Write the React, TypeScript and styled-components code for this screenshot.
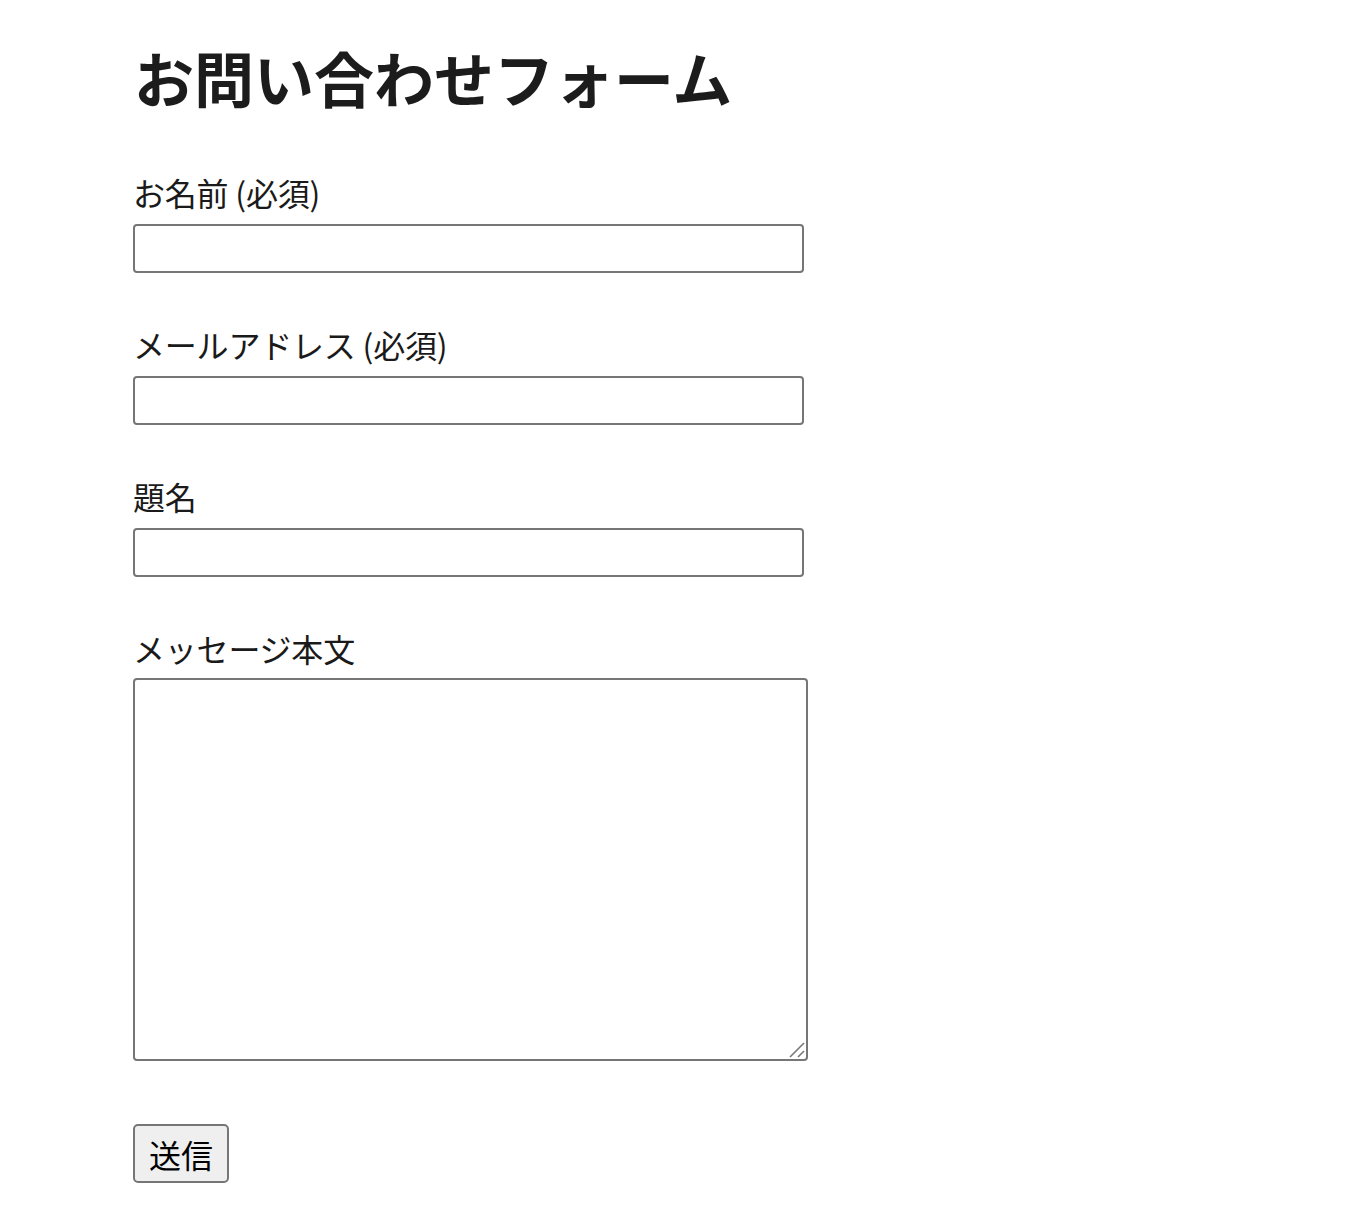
import styled, { createGlobalStyle } from 'styled-components';

const GlobalStyle = createGlobalStyle`
  html, body {
    margin: 0;
    padding: 0;
    background: #ffffff;
  }
  body {
    font-family: "Noto Sans CJK JP", "Noto Sans", sans-serif;
    color: #1a1a1a;
  }
`;

const Page = styled.main`
  padding: 43px 0 40px 133px;
`;

const Heading = styled.h1`
  margin: 0 0 58px 1px;
  font-size: 60px;
  line-height: 67px;
  font-weight: 700;
  color: #1c1c1c;
`;

const Form = styled.form`
  display: flex;
  flex-direction: column;
  align-items: flex-start;
`;

const Field = styled.div<{ $gapAfter?: number }>`
  display: flex;
  flex-direction: column;
  align-items: flex-start;
  margin-bottom: ${props => props.$gapAfter ?? 47}px;
`;

const Label = styled.label`
  display: block;
  font-size: 32px;
  line-height: 48px;
  margin: 0 0 8px 0;
  letter-spacing: -0.2px;
  color: #1a1a1a;
`;

const TextInput = styled.input`
  box-sizing: border-box;
  width: 671px;
  height: 49px;
  margin: 0;
  padding: 2px 6px;
  border: 2px solid #767676;
  border-radius: 4px;
  background: #ffffff;
  font-family: inherit;
  font-size: 26px;
  outline: none;
`;

const AreaWrap = styled.div`
  position: relative;
  display: flex;
  margin-top: -2px;
`;

const TextArea = styled.textarea`
  box-sizing: border-box;
  width: 675px;
  height: 383px;
  margin: 0;
  padding: 4px 6px;
  border: 2px solid #767676;
  border-radius: 4px;
  background: #ffffff;
  font-family: inherit;
  font-size: 26px;
  resize: none;
  outline: none;
`;

const Grip = styled.svg`
  position: absolute;
  right: 3px;
  bottom: 3px;
  width: 16px;
  height: 16px;
  pointer-events: none;
`;

const SubmitButton = styled.button`
  box-sizing: border-box;
  height: 59px;
  padding: 0 14px;
  border: 2px solid #767676;
  border-radius: 5px;
  background: #efefef;
  color: #000000;
  font-family: inherit;
  font-size: 32px;
  line-height: 46px;
`;

export default function App() {
  return (
    <>
      <GlobalStyle />
      <Page>
        <Heading>お問い合わせフォーム</Heading>
        <Form onSubmit={e => e.preventDefault()}>
          <Field>
            <Label htmlFor="name">お名前 (必須)</Label>
            <TextInput id="name" type="text" />
          </Field>
          <Field>
            <Label htmlFor="email">メールアドレス (必須)</Label>
            <TextInput id="email" type="email" />
          </Field>
          <Field>
            <Label htmlFor="subject">題名</Label>
            <TextInput id="subject" type="text" />
          </Field>
          <Field $gapAfter={63}>
            <Label htmlFor="message">メッセージ本文</Label>
            <AreaWrap>
              <TextArea id="message" />
              <Grip viewBox="0 0 16 16">
                <line x1="1" y1="15" x2="15" y2="1" stroke="#777" strokeWidth="1.6" />
                <line x1="9" y1="15" x2="15" y2="9" stroke="#777" strokeWidth="1.6" />
              </Grip>
            </AreaWrap>
          </Field>
          <SubmitButton type="submit">送信</SubmitButton>
        </Form>
      </Page>
    </>
  );
}
